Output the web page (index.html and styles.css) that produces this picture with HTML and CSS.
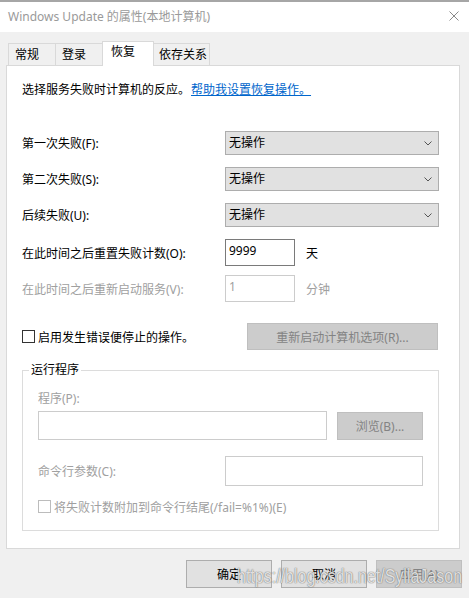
FILE: index.html
```html
<!DOCTYPE html>
<html lang="zh-CN">
<head>
<meta charset="utf-8">
<title>Windows Update 的属性(本地计算机)</title>
<link rel="stylesheet" href="styles.css">
</head>
<body>
<div class="window">
  <div class="titlebar">
    <span class="title">Windows Update 的属性(本地计算机)</span>
    <svg class="close" width="10" height="10" viewBox="0 0 10 10"><path d="M0.5 0.5 L9.5 9.5 M9.5 0.5 L0.5 9.5" stroke="#8a8a8a" stroke-width="1" fill="none"/></svg>
  </div>
  <div class="tabs">
    <div class="tab tab-general">常规</div>
    <div class="tab tab-logon">登录</div>
    <div class="tab tab-recovery active">恢复</div>
    <div class="tab tab-deps">依存关系</div>
  </div>
  <div class="panel">
    <div class="intro">选择服务失败时计算机的反应。<span class="link">帮助我设置恢复操作。</span></div>

    <div class="row row-select row-first">
      <span class="label">第一次失败(F):</span>
      <div class="select"><span>无操作</span><svg class="chev" width="8" height="5" viewBox="0 0 8 5"><path d="M0.5 0.5 L4 4 L7.5 0.5" stroke="#555" stroke-width="1" fill="none"/></svg></div>
    </div>
    <div class="row row-select">
      <span class="label">第二次失败(S):</span>
      <div class="select"><span>无操作</span><svg class="chev" width="8" height="5" viewBox="0 0 8 5"><path d="M0.5 0.5 L4 4 L7.5 0.5" stroke="#555" stroke-width="1" fill="none"/></svg></div>
    </div>
    <div class="row row-select">
      <span class="label">后续失败(U):</span>
      <div class="select"><span>无操作</span><svg class="chev" width="8" height="5" viewBox="0 0 8 5"><path d="M0.5 0.5 L4 4 L7.5 0.5" stroke="#555" stroke-width="1" fill="none"/></svg></div>
    </div>

    <div class="row row-input">
      <span class="label">在此时间之后重置失败计数(O):</span>
      <div class="input small">9999</div>
      <span class="unit">天</span>
    </div>
    <div class="row row-input row-restart disabled">
      <span class="label">在此时间之后重新启动服务(V):</span>
      <div class="input small dis">1</div>
      <span class="unit">分钟</span>
    </div>

    <div class="row row-check">
      <span class="checkbox"></span>
      <span class="check-label">启用发生错误便停止的操作。</span>
      <div class="btn btn-dis btn-restart">重新启动计算机选项(R)...</div>
    </div>

    <div class="group disabled">
      <div class="group-title">运行程序</div>
      <div class="g-label">程序(P):</div>
      <div class="g-row g-program">
        <div class="input dis prog"></div>
        <div class="btn btn-dis btn-browse">浏览(B)...</div>
      </div>
      <div class="g-row g-cmd">
        <span class="cmd-label">命令行参数(C):</span>
        <div class="input dis cmd"></div>
      </div>
      <div class="g-row g-check">
        <span class="checkbox dis"></span>
        <span class="check-label">将失败计数附加到命令行结尾(/fail=%1%)(E)</span>
      </div>
    </div>
  </div>
  <div class="footer">
    <div class="btn">确定</div>
    <div class="btn">取消</div>
    <div class="btn btn-dis">应用(A)</div>
  </div>
  <div class="watermark">https://blog.csdn.net/SyllaJason</div>
</div>
</body>
</html>
```

FILE: styles.css
```css
* { box-sizing: border-box; }
html, body { margin: 0; padding: 0; }
body {
  width: 469px;
  height: 598px;
  background: #f0f0f0;
  font-family: "Noto Sans", "Noto Sans CJK SC", sans-serif;
  font-size: 12px;
  color: #000;
  overflow: hidden;
}
.window {
  position: relative;
  width: 469px;
  height: 598px;
  display: flex;
  flex-direction: column;
}
.titlebar {
  height: 32px;
  background: #fff;
  border-top: 2px solid #a6a6a6;
  display: flex;
  align-items: center;
  padding-left: 8px;
  padding-right: 10px;
}
.title {
  color: #9a9a9a;
  font-size: 12px;
  flex: 1;
  line-height: 16px;
  margin-top: -1px;
}
.close { display: block; margin-top: -2px; }

.tabs {
  display: flex;
  align-items: flex-end;
  height: 25px;
  margin-top: 9px;
  margin-bottom: -1px;
  padding-left: 8px;
  position: relative;
  z-index: 1;
}
.tab {
  height: 23px;
  border: 1px solid #d9d9d9;
  background: #f0f0f0;
  line-height: 21px;
  padding-left: 6px;
  margin-left: -1px;
  white-space: nowrap;
}
.tab-general { width: 48px; margin-left: 0; }
.tab-logon { width: 48px; }
.tab-recovery { width: 52px; }
.tab-deps { width: 57px; padding-left: 5px; }
.tab.active {
  height: 25px;
  background: #fff;
  border-bottom: none;
  line-height: 20px;
  padding-left: 8px;
  position: relative;
  z-index: 2;
}

.panel {
  margin-left: 6px;
  width: 454px;
  height: 484px;
  background: #fff;
  border: 1px solid #d9d9d9;
  padding: 12px 20px 0 15px;
}
.intro { height: 24px; line-height: 24px; white-space: nowrap; }
.link { color: #0066cc; text-decoration: underline; margin-left: 1px; }

.row { display: flex; align-items: center; }
.label { width: 203px; flex: none; white-space: nowrap; }
.row-select { height: 24px; margin-top: 12px; }
.row-first { margin-top: 29px; }
.select {
  width: 214px;
  height: 24px;
  background: #e1e1e1;
  border: 1px solid #adadad;
  display: flex;
  align-items: center;
  justify-content: space-between;
  padding: 0 6px 0 3px;
  line-height: 16px;
}
.chev { display: block; }

.row-input { height: 27px; margin-top: 12px; }
.row-restart { margin-top: 9px; }
.input {
  background: #fff;
  border: 1px solid #7a7a7a;
  padding: 3px 3px 0 3px;
  line-height: 16px;
}
.input.small { width: 70px; height: 27px; }
.input.dis { border-color: #cccccc; color: #a0a0a0; }
.unit { margin-left: 11px; }
.disabled .label, .disabled .unit, .disabled .g-label,
.disabled .cmd-label, .disabled .check-label { color: #a0a0a0; }

.row-check { height: 27px; margin-top: 21px; }
.checkbox {
  width: 13px;
  height: 13px;
  border: 1px solid #333;
  background: #fff;
  flex: none;
}
.checkbox.dis { border-color: #bcbcbc; }
.check-label { margin-left: 3px; white-space: nowrap; }

.btn {
  width: 86px;
  height: 28px;
  background: #e1e1e1;
  border: 1px solid #adadad;
  display: flex;
  align-items: center;
  justify-content: center;
  white-space: nowrap;
}
.btn-dis { background: #cccccc; border-color: #bfbfbf; color: #838383; }
.btn-restart { width: 191px; height: 27px; margin-left: auto; margin-right: 1px; }

.group {
  margin-top: 20px;
  width: 417px;
  border: 1px solid #dcdcdc;
  padding: 0 15px 17px 15px;
}
.group-title {
  width: fit-content;
  margin: -9px 0 0 -9px;
  padding: 0 2px;
  background: #fff;
  line-height: 16px;
  color: #000;
}
.g-label { margin-top: 13px; line-height: 16px; }
.g-row { display: flex; align-items: center; }
.g-program { height: 29px; margin-top: 4px; }
.input.prog { width: 289px; height: 29px; }
.btn-browse { margin-left: 10px; height: 28px; }
.g-cmd { height: 30px; margin-top: 16px; }
.cmd-label { width: 187px; flex: none; }
.input.cmd { width: 198px; height: 30px; }
.g-check { height: 13px; margin-top: 14px; }

.footer {
  display: flex;
  justify-content: flex-end;
  gap: 9px;
  margin-top: 11px;
  padding-right: 7px;
}

.watermark {
  position: absolute;
  left: 237px;
  top: 565px;
  font-family: "Liberation Sans", sans-serif;
  font-size: 16px;
  line-height: 18px;
  color: rgba(255, 255, 255, 0.78);
  text-shadow: 0 0 1px rgba(90, 90, 90, 0.75), 0 0 1px rgba(90, 90, 90, 0.6);
  transform: scaleY(1.3);
  transform-origin: left top;
  white-space: nowrap;
  pointer-events: none;
}
```
